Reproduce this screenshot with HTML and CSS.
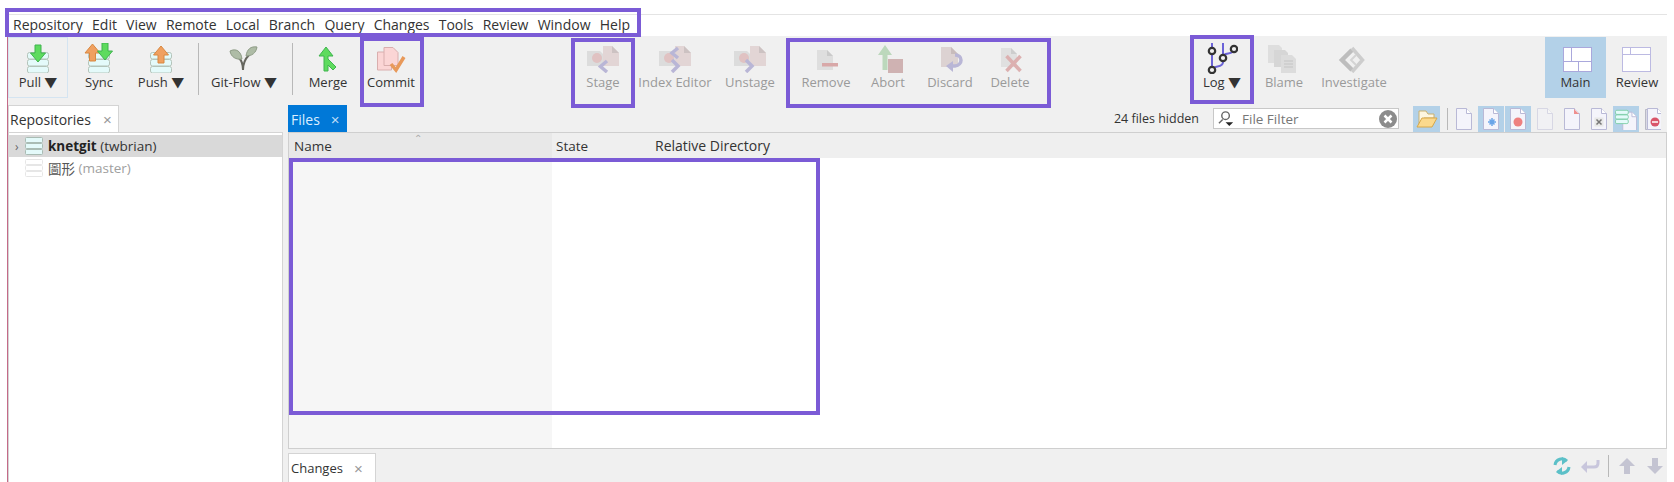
FILE: index.html
```html
<!DOCTYPE html>
<html lang="en">
<head>
<meta charset="utf-8">
<title>SourceGear</title>
<link rel="stylesheet" href="styles.css">
</head>
<body>
<svg class="defs" width="0" height="0" aria-hidden="true">
  <defs>
    <g id="db">
      <rect x="5.500" y="9.500" width="21" height="6.500" rx="2" fill="#e4fafa" stroke="#b4c4ba"/>
      <rect x="5.500" y="16.500" width="21" height="6.500" rx="2" fill="#e4fafa" stroke="#b4c4ba"/>
      <rect x="5.500" y="23.500" width="21" height="6.500" rx="2" fill="#e4fafa" stroke="#b4c4ba"/>
    </g>
    <path id="arrow-down" d="M-3 -9h6v8h4.500l-7.500 9l-7.500 -9h4.500z"/>
    <path id="arrow-up" d="M-3 9h6v-8h4.500l-7.500 -9l-7.500 9h4.500z"/>
    <g id="stage-base">
      <path d="M2 8h13l3 3v12H2z" fill="#dcdcdc"/>
      <path d="M18 3h9l7 7v13H18z" fill="#e2d5d5"/>
      <path d="M27 3l7 7h-7z" fill="#ccc2c2"/>
      <circle cx="12" cy="15" r="5" fill="#e0c2c2"/>
    </g>
    <g id="small-doc">
      <path d="M.5 .5h10l5 5v16h-15z" fill="#f4f4fb" stroke="#b9b9d6"/>
      <path d="M10.500 .5v5h5" fill="#fff" stroke="#b9b9d6"/>
    </g>
  </defs>
</svg>

<div class="app">
  <nav class="menubar">
    <span>Repository</span><span>Edit</span><span>View</span><span>Remote</span><span>Local</span><span>Branch</span><span>Query</span><span>Changes</span><span>Tools</span><span>Review</span><span>Window</span><span>Help</span>
  </nav>

  <div class="toolbar">
    <button class="tool w-pull selected">
      <svg class="ico" viewBox="0 0 32 30"><use href="#db"/><use href="#arrow-down" x="16" y="11" fill="#5edb5e" stroke="#3fb44f"/></svg>
      <span>Pull ▼</span>
    </button>
    <button class="tool w-sync">
      <svg class="ico" viewBox="0 0 32 30"><use href="#db"/><use href="#arrow-up" x="9.500" y="9" fill="#f0a060" stroke="#d88840"/><use href="#arrow-down" x="22" y="9" fill="#5edb5e" stroke="#3fb44f"/></svg>
      <span>Sync</span>
    </button>
    <button class="tool w-push">
      <svg class="ico" viewBox="0 0 32 30"><use href="#db"/><use href="#arrow-up" x="16" y="11" fill="#f0a060" stroke="#d88840"/></svg>
      <span>Push ▼</span>
    </button>
    <i class="vsep vsep-a"></i>
    <button class="tool w-flow">
      <svg class="ico" viewBox="0 0 32 30"><path d="M15 27c0-6-1-9-4-12M15 27c0-7 3-12 6-15" fill="none" stroke="#66665e" stroke-width="2"/><path d="M2 8c6-3 11 0 12 8C8 17 3 14 2 8z" fill="#aebca6" stroke="#8e9c86"/><path d="M29 4c-6-1-10 2-11 9 6 0 10-3 11-9z" fill="#aebca6" stroke="#8e9c86"/></svg>
      <span>Git-Flow ▼</span>
    </button>
    <i class="vsep vsep-b"></i>
    <button class="tool w-merge">
      <svg class="ico" viewBox="0 0 32 30"><path d="M12 28V13H7l7-9 7 9h-5v3l8 8-3 3-5-5v6z" fill="#5edb5e" stroke="#3fb44f"/></svg>
      <span>Merge</span>
    </button>
    <button class="tool w-commit">
      <svg class="ico" viewBox="0 0 32 30"><path d="M2.500 9h10l4 4v14h-14z" fill="#fbd5d5" stroke="#d9aeae"/><path d="M9 4.500h9l5 5v13H9z" fill="#fbd5d5" stroke="#d9aeae"/><path d="M16 21l5 6 8-13" fill="none" stroke="#e8995a" stroke-width="3.500"/></svg>
      <span>Commit</span>
    </button>

    <button class="tool off w-stage">
      <svg class="ico-wide" viewBox="0 0 36 30"><use href="#stage-base"/><path d="M22 18l-6.500 5.500L22 29" fill="none" stroke="#b9b6d6" stroke-width="3.500"/></svg>
      <span>Stage</span>
    </button>
    <button class="tool off w-index">
      <svg class="ico-wide" viewBox="0 0 36 30"><use href="#stage-base"/><path d="M21 5l-6 5 6 5M15 17l6 6-6 6" fill="none" stroke="#b9b6d6" stroke-width="3.500"/></svg>
      <span>Index Editor</span>
    </button>
    <button class="tool off w-unstage">
      <svg class="ico-wide" viewBox="0 0 36 30"><use href="#stage-base"/><path d="M14 17l6 6-6 6" fill="none" stroke="#b9b6d6" stroke-width="3.500"/></svg>
      <span>Unstage</span>
    </button>

    <button class="tool off w-remove">
      <svg class="ico" viewBox="0 0 32 30"><path d="M7 7h10l6 6v14H7z" fill="#dedede"/><path d="M17 7l6 6h-6z" fill="#cacaca"/><path d="M12 20h16v3.500H12z" fill="#d8a8a8"/></svg>
      <span>Remove</span>
    </button>
    <button class="tool off w-abort">
      <svg class="ico" viewBox="0 0 32 30"><path d="M10.500 27V12H6l7-10 7 10h-4.500v15z" fill="#bcd8bc"/><path d="M16 16h15v14H16z" fill="#cfb2b2"/></svg>
      <span>Abort</span>
    </button>
    <button class="tool off w-discard">
      <svg class="ico" viewBox="0 0 32 30"><path d="M7 4h10l7 7v13H7z" fill="#dcd2d2"/><path d="M17 4l7 7h-7z" fill="#c8bcbc"/><path d="M21 12c8 0 8 10 0 11h-4" fill="none" stroke="#b9b6d6" stroke-width="3.500"/><path d="M19 18l-7 5 7 6z" fill="#b9b6d6"/></svg>
      <span>Discard</span>
    </button>
    <button class="tool off w-delete">
      <svg class="ico" viewBox="0 0 32 30"><path d="M7 5h10l6 6v13H7z" fill="#e0e0e0"/><path d="M17 5l6 6h-6z" fill="#cdcdcd"/><path d="M12.500 13l14 15M26.500 13l-14 15" fill="none" stroke="#dcb0b0" stroke-width="3.500"/></svg>
      <span>Delete</span>
    </button>

    <button class="tool w-log">
      <svg class="ico-tall" viewBox="0 0 32 32"><path d="M6 1v28M17 1v15M6 29c0-7 11-2 11-9M28 7c0 7-11 2-11 8" fill="none" stroke="#6b63d8" stroke-width="2"/><g fill="#f0f0f0" stroke="#333" stroke-width="2.200"><circle cx="6" cy="9" r="3.200"/><circle cx="17" cy="16" r="3.200"/><circle cx="28" cy="7" r="3.200"/><circle cx="6" cy="28" r="3.200"/></g></svg>
      <span>Log ▼</span>
    </button>
    <button class="tool off w-blame">
      <svg class="ico" viewBox="0 0 32 30"><path d="M0 2h11l3 3v15H0z" fill="#dedede"/><path d="M6 7h11l3 3v14H6z" fill="#d6d6d6"/><path d="M13 12h11l4 4v14H13z" fill="#dcdcdc"/><path d="M16 18h9M16 21h9M16 24h9" stroke="#c4c4c4"/></svg>
      <span>Blame</span>
    </button>
    <button class="tool off w-inv">
      <svg class="ico" viewBox="0 0 32 30"><path d="M14 7L4 17l10 10" fill="none" stroke="#bdbdbd" stroke-width="4.500"/><path d="M14 5l10.500 12L14 29" fill="none" stroke="#cdcdcd" stroke-width="3.500"/><path d="M18 12l-5 5 5 5" fill="none" stroke="#d4d4d4" stroke-width="2"/></svg>
      <span>Investigate</span>
    </button>

    <button class="tool w-main active">
      <svg class="ico" viewBox="0 0 32 30"><rect x="3.500" y="4.500" width="28" height="24" fill="#fff" stroke="#aaa8dc"/><path d="M3.500 18.500h28M11.500 4.500v14M18.500 18.500v10" fill="none" stroke="#aaa8dc"/></svg>
      <span>Main</span>
    </button>
    <button class="tool w-review">
      <svg class="ico" viewBox="0 0 32 30"><rect x="1.500" y="4.500" width="28" height="24" fill="#fff" stroke="#bcbae2"/><path d="M1.500 11.500h28M9.500 4.500v7" fill="none" stroke="#bcbae2"/></svg>
      <span>Review</span>
    </button>
  </div>

  <div class="workspace">
    <section class="left">
      <div class="tabrow">
        <div class="tab repo-tab">Repositories <b class="x">×</b></div>
      </div>
      <div class="tree">
        <div class="row sel">
          <span class="chev">›</span>
          <svg class="dbico" viewBox="0 0 18 18"><g fill="#e4fafa" stroke="#a9bcb4"><rect x=".5" y=".5" width="17" height="5" rx="1"/><rect x=".5" y="6.500" width="17" height="5" rx="1"/><rect x=".5" y="12.500" width="17" height="5" rx="1"/></g></svg>
          <strong>knetgit</strong>&nbsp;<span>(twbrian)</span>
        </div>
        <div class="row dim">
          <span class="chev"></span>
          <svg class="dbico" viewBox="0 0 18 18"><g fill="#fff" stroke="#e6e6e6"><rect x=".5" y=".5" width="17" height="5" rx="1"/><rect x=".5" y="6.500" width="17" height="5" rx="1"/><rect x=".5" y="12.500" width="17" height="5" rx="1"/></g></svg>
          <span class="cjk">圖形</span>&nbsp;<span class="grey">(master)</span>
        </div>
      </div>
    </section>

    <section class="right">
      <div class="tabrow files-bar">
        <div class="tab files-tab">Files <b class="x">×</b></div>
        <div class="hidden-count">24 files hidden</div>
        <div class="filter">
          <svg class="filter-ico" viewBox="0 0 18 18"><circle cx="8" cy="6" r="4" fill="#fff" stroke="#666" stroke-width="1.500"/><path d="M5 10L1 14" stroke="#666" stroke-width="1.500"/><path d="M8 13h8l-4 4z" fill="#222"/></svg>
          <span class="filter-text">File Filter</span>
          <svg class="clear" viewBox="0 0 18 18"><circle cx="9" cy="9" r="9" fill="#8c8c8c"/><path d="M5.500 5.500l7 7M12.500 5.500l-7 7" stroke="#fff" stroke-width="2.500"/></svg>
        </div>
        <div class="fbtn on folder">
          <svg viewBox="0 0 22 22" class="fico"><path d="M3 18V3h7l2 3h6v4H8z" fill="#fdf6e0" stroke="#c9b070"/><path d="M1 19h15l5-9H6z" fill="#fbd98d" stroke="#d7a84a"/></svg>
        </div>
        <i class="fsep"></i>
        <div class="fbtn"><svg class="fdoc" viewBox="0 0 16 22"><use href="#small-doc"/></svg></div>
        <div class="fbtn on"><svg class="fdoc" viewBox="0 0 16 22"><use href="#small-doc"/><path d="M9 10v8M5 14h8M6.500 11.500l5 5M11.500 11.500l-5 5" stroke="#6aa5e8" stroke-width="1.500"/></svg></div>
        <div class="fbtn on"><svg class="fdoc" viewBox="0 0 16 22"><use href="#small-doc"/><circle cx="8" cy="14" r="4.500" fill="#ee8080"/></svg></div>
        <div class="fbtn"><svg class="fdoc faint" viewBox="0 0 16 22"><use href="#small-doc"/></svg></div>
        <div class="fbtn"><svg class="fdoc" viewBox="0 0 16 22"><use href="#small-doc"/><path d="M10 1l5 5h-5z" fill="#ee8f8f"/></svg></div>
        <div class="fbtn"><svg class="fdoc" viewBox="0 0 16 22"><use href="#small-doc"/><rect x="3.500" y="9.500" width="9" height="9" fill="#e8e8e8"/><path d="M5.500 11.500l5 5M10.500 11.500l-5 5" stroke="#777" stroke-width="1.500"/></svg></div>
        <div class="fbtn on"><svg viewBox="0 0 24 22" class="fico"><g transform="translate(8 3)"><use href="#small-doc"/></g><g fill="#e4fafa" stroke="#7fcfa8"><rect x=".5" y="1.500" width="14" height="4.500" rx="1.500"/><rect x=".5" y="6.500" width="14" height="4.500" rx="1.500"/><rect x=".5" y="11.500" width="14" height="4.500" rx="1.500"/></g></svg></div>
        <div class="fbtn"><svg class="fdoc" viewBox="0 0 16 22"><path d="M.5 1.500h4v20h-4z" fill="#d9d9e4" stroke="#b9b9c6"/><use href="#small-doc" x="2"/><circle cx="10" cy="14" r="4.500" fill="#d9546a"/><path d="M7 14h6" stroke="#fff" stroke-width="1.500"/></svg></div>
      </div>

      <div class="grid">
        <div class="thead">
          <div class="th th-name">Name<span class="sort">⌃</span></div>
          <div class="th th-state">State</div>
          <div class="th th-dir">Relative Directory</div>
        </div>
        <div class="tbody"><div class="name-col"></div></div>
      </div>

      <div class="bottom">
        <div class="tab changes-tab">Changes <b class="x">×</b></div>
        <div class="bottom-tools">
          <svg class="bico" viewBox="0 0 20 20"><path d="M3 9a7 7 0 0 1 12-4M17 11a7 7 0 0 1-12 4" fill="none" stroke="#5cc0c8" stroke-width="3"/><path d="M10 1v8l5-4zM10 19v-8l-5 4z" fill="#5cc0c8"/></svg>
          <svg class="bico" viewBox="0 0 20 20"><path d="M18 4v3c0 3-2 4-4 4H5" fill="none" stroke="#c8c6dc" stroke-width="3"/><path d="M7 5l-6 6 6 6z" fill="#c8c6dc"/></svg>
          <i class="bsep"></i>
          <svg class="bico" viewBox="0 0 20 20"><path d="M10 2l8 8h-5v8H7v-8H2z" fill="#c4c4d2"/></svg>
          <svg class="bico" viewBox="0 0 20 20"><path d="M10 18l8-8h-5V2H7v8H2z" fill="#c4c4d2"/></svg>
        </div>
      </div>
    </section>
  </div>
</div>

<div class="mark mark-menu"></div>
<div class="mark mark-commit"></div>
<div class="mark mark-stage"></div>
<div class="mark mark-remove"></div>
<div class="mark mark-log"></div>
<div class="mark mark-files"></div>
</body>
</html>
```

FILE: styles.css
```css
* { box-sizing: border-box; }
html, body { margin: 0; padding: 0; height: 100%; background: #fff; overflow: hidden; }
body { font-family: "Open Sans", "Noto Sans CJK TC", sans-serif; font-size: 13px; color: #333; position: relative; }
.defs { position: absolute; }

.app { margin: 14px 7px 0 7px; height: 468px; border-left: 1px solid #c46a88; display: flex; flex-direction: column; }

.menubar { height: 22px; display: flex; gap: 9.200px; align-items: center; padding: 0 0 3px 5px; background: #fff; border-top: 1px solid #e4e4e4; font-size: 14px; color: #333; white-space: nowrap; }

.toolbar { height: 64px; background: #f0f0f0; display: flex; align-items: flex-start; }
.tool { height: 61px; margin-top: 1px; padding: 5px 0 0; background: none; border: 1px solid transparent; font: inherit; color: #333; display: flex; flex-direction: column; align-items: center; white-space: nowrap; flex: none; }
.tool span { line-height: 18px; display: block; }
.tool.off { color: #9a9a9a; }
.tool .ico, .tool .ico-wide, .tool .ico-tall { display: block; height: 30px; }
.tool .ico { width: 32px; }
.tool .ico-wide { width: 36px; }
.tool .ico-tall { width: 32px; height: 32px; margin-top: -1px; margin-bottom: -1px; }
.selected { border-color: #d4e4f1; }
.active { background: #b3d1e8; border-color: #b3d1e8; }
.vsep { flex: none; width: 1px; height: 52px; margin-top: 7px; background: #b8b8b8; }
.vsep-a { margin-left: 7px; margin-right: 6px; }
.vsep-b { margin-left: 9px; margin-right: 6px; }

.w-pull { width: 60px; }
.w-sync { width: 62px; }
.w-push { width: 60px; margin-left: 1px; }
.w-flow { width: 78px; }
.w-merge { width: 58px; }
.w-commit { width: 60px; margin-left: 4px; }
.w-stage { width: 60px; margin-left: 152px; }
.w-index { width: 76px; margin-left: 4px; }
.w-unstage { width: 66px; margin-left: 4px; }
.w-remove { width: 60px; margin-left: 13px; }
.w-abort { width: 60px; margin-left: 2px; }
.w-discard { width: 60px; margin-left: 2px; }
.w-delete { width: 60px; margin-left: 0; }
.w-log { width: 60px; margin-left: 152px; }
.w-blame { width: 60px; margin-left: 2px; }
.w-inv { width: 80px; margin-left: 0; }
.w-main { width: 61px; margin-left: 151px; }
.w-review { width: 46px; margin-left: 8px; }

.workspace { flex: 1; display: flex; background: #f0f0f0; min-height: 0; }
.left { width: 275px; flex: none; display: flex; flex-direction: column; }
.right { flex: 1; min-width: 0; margin-left: 5px; display: flex; flex-direction: column; }

.tabrow { height: 32px; flex: none; display: flex; align-items: flex-end; }
.tab { height: 27px; display: flex; align-items: center; background: #fff; border: 1px solid #d4d4d4; border-bottom: 0; padding-left: 3px; white-space: nowrap; }
.x { font-weight: 400; color: #999; font-size: 15px; margin-left: 11px; font-family: "Liberation Sans", sans-serif; }
.repo-tab { width: 111px; font-size: 14px; padding-left: 1px; }
.repo-tab .x { margin-left: 12px; }
.files-tab { width: 59px; background: #0078d7; border-color: #0078d7; color: #dbeeff; font-size: 14px; padding-left: 2px; }
.files-tab .x { color: #bcdcf6; margin-left: 11px; }

.tree { flex: 1; background: #fff; border: 1px solid #d4d4d4; border-bottom: 0; padding-top: 2px; font-size: 13.500px; }
.row { height: 21px; display: flex; align-items: center; padding-left: 6px; white-space: nowrap; }
.row.sel { background: #d9d9d9; height: 22px; }
.chev { width: 10px; color: #666; font-size: 12px; }
.dbico { width: 18px; height: 18px; margin-right: 5px; flex: none; }
.row strong { font-weight: 700; color: #222; }
.cjk { font-family: "Noto Sans CJK TC", sans-serif; color: #555; }
.grey { color: #a0a0a0; }

.hidden-count { margin-left: auto; align-self: center; margin-top: 5px; font-size: 12.500px; white-space: nowrap; }
.filter { width: 186px; height: 21px; margin: 0 14px 3px 14px; background: #fff; border: 1px solid #c8c8c8; display: flex; align-items: center; padding: 0 1px 0 4px; flex: none; }
.filter-ico { width: 17px; height: 17px; flex: none; }
.filter-text { margin-left: 7px; color: #777; flex: 1; font-size: 13.500px; }
.clear { width: 18px; height: 18px; flex: none; }
.fbtn { width: 26px; height: 26px; margin-right: 1px; display: flex; align-items: center; justify-content: center; flex: none; }
.fbtn.on { background: #b3d1e8; }
.fico { width: 22px; height: 22px; }
.fdoc { width: 16px; height: 22px; }
.faint { opacity: .45; }
.folder { width: 27px; }
.fsep { width: 1px; height: 22px; background: #b8b8b8; margin: 0 3px 2px 6px; flex: none; }

.grid { flex: 1; min-height: 0; display: flex; flex-direction: column; border: 1px solid #cfcfcf; background: #fff; }
.thead { height: 25px; flex: none; display: flex; background: #efefef; }
.th { display: flex; align-items: center; padding-left: 5px; color: #333; font-size: 14px; position: relative; }
.th-name { width: 263px; background: #e8e8e8; font-size: 13.500px; }
.th-state { width: 99px; padding-left: 4px; font-size: 13.500px; }
.th-dir { width: 394px; padding-left: 4px; }
.sort { position: absolute; left: 125px; top: -2px; font-size: 10px; color: #aaa; }
.tbody { flex: 1; display: flex; }
.name-col { width: 263px; background: #f6f6f6; }

.bottom { height: 33px; flex: none; display: flex; align-items: flex-end; }
.changes-tab { width: 88px; height: 29px; padding-left: 2px; }
.bottom-tools { display: flex; align-items: center; gap: 8px; margin: 0 2px 5px auto; }
.bico { width: 20px; height: 20px; flex: none; }
.bsep { width: 1px; height: 22px; background: #b8b8b8; }

.mark { position: absolute; border: 4px solid #7b5bd6; pointer-events: none; }
.mark-menu { left: 5px; top: 8px; width: 636px; height: 29px; }
.mark-commit { left: 360px; top: 37px; width: 64px; height: 70px; }
.mark-stage { left: 571px; top: 38px; width: 64px; height: 70px; }
.mark-remove { left: 786px; top: 38px; width: 265px; height: 70px; }
.mark-log { left: 1190px; top: 35px; width: 64px; height: 69px; }
.mark-files { left: 289px; top: 158px; width: 531px; height: 257px; }
```
